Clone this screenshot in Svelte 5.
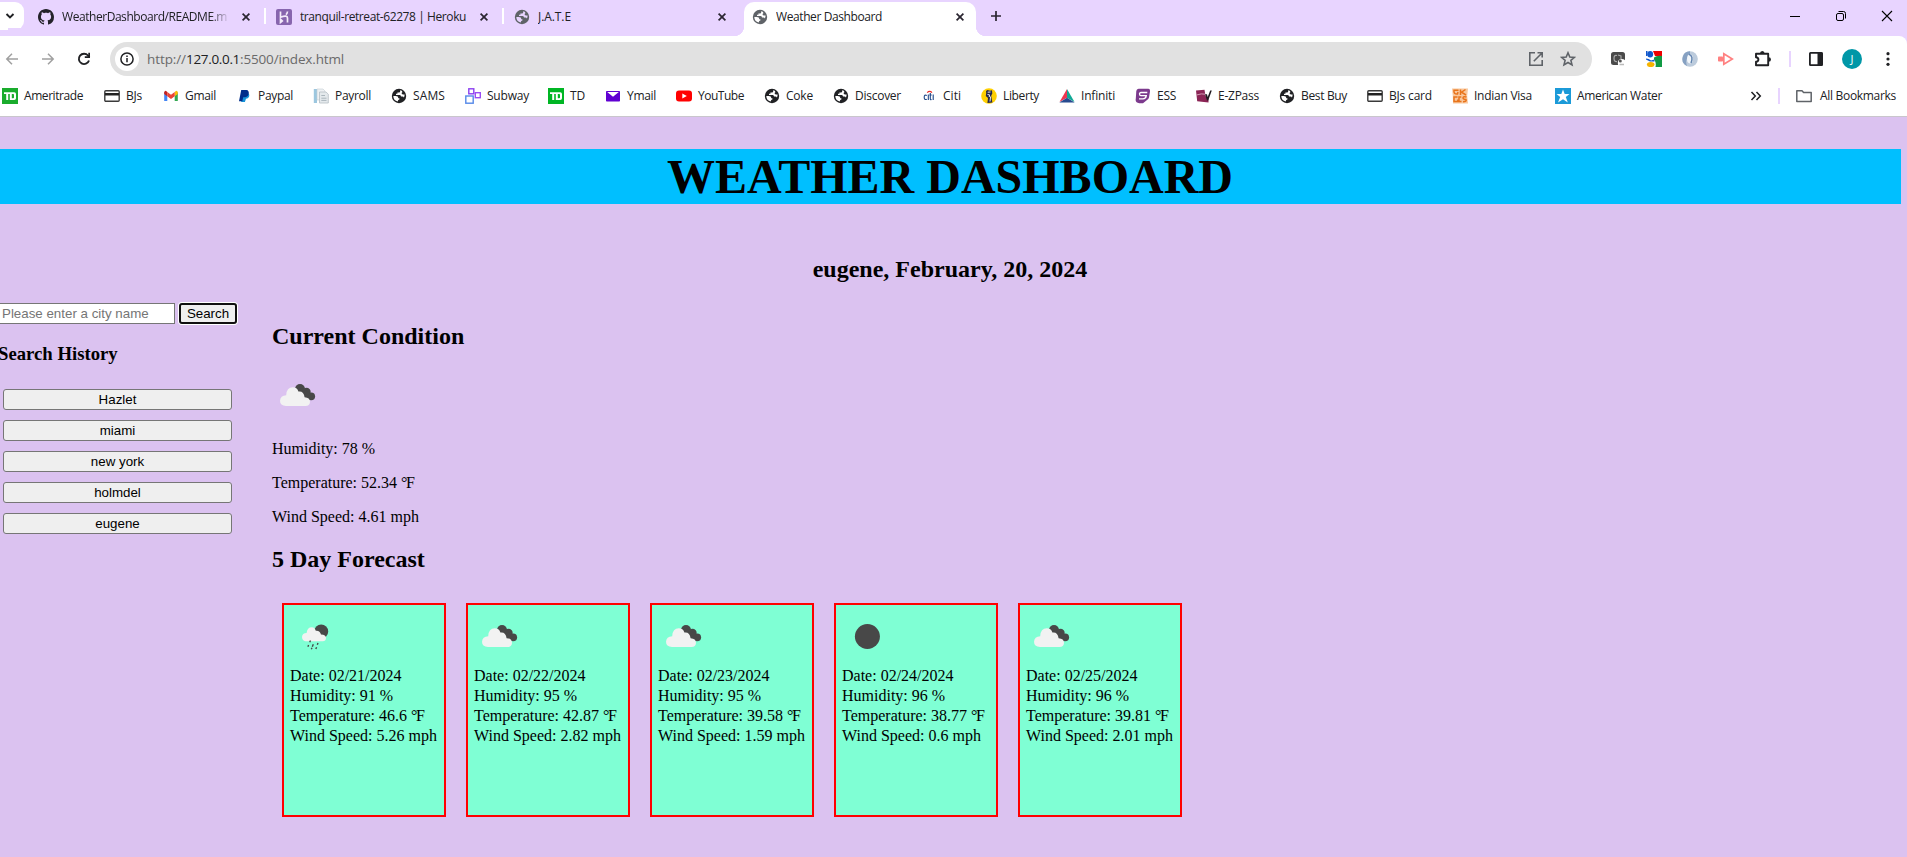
<script>
  // Spreads or tightens the letters of a label so that it takes the given width.
  function fit(node, width) {
    if (!width) return;
    node.style.letterSpacing = '0px';
    const natural = node.getBoundingClientRect().width;
    node.style.letterSpacing = `${(width - natural) / node.textContent.length}px`;
  }

  // x: left edge of the icon, w: label width
  const marks = [
    { x: 2, w: 59, icon: 'td', label: 'Ameritrade' },
    { x: 104, w: 16, icon: 'card', label: 'BJs' },
    { x: 163, w: 31, icon: 'gmail', label: 'Gmail' },
    { x: 236, w: 35, icon: 'paypal', label: 'Paypal' },
    { x: 313, w: 36, icon: 'payroll', label: 'Payroll' },
    { x: 391, w: 32, icon: 'globe', label: 'SAMS' },
    { x: 465, w: 42, icon: 'subway', label: 'Subway' },
    { x: 548, w: 15, icon: 'td2', label: 'TD' },
    { x: 605, w: 29, icon: 'ymail', label: 'Ymail' },
    { x: 676, w: 46, icon: 'youtube', label: 'YouTube' },
    { x: 764, w: 27, icon: 'globe', label: 'Coke' },
    { x: 833, w: 46, icon: 'globe', label: 'Discover' },
    { x: 921, w: 18, icon: 'citi', label: 'Citi' },
    { x: 981, w: 36, icon: 'liberty', label: 'Liberty' },
    { x: 1059, w: 34, icon: 'infiniti', label: 'Infiniti' },
    { x: 1135, w: 19, icon: 'ess', label: 'ESS' },
    { x: 1196, w: 41, icon: 'ezpass', label: 'E-ZPass' },
    { x: 1279, w: 46, icon: 'globe', label: 'Best Buy' },
    { x: 1367, w: 43, icon: 'card', label: 'BJs card' },
    { x: 1452, w: 58, icon: 'visa', label: 'Indian Visa' },
    { x: 1555, w: 85, icon: 'water', label: 'American Water' },
    { x: 1750 }
  ];
  const bookmarks = marks.slice(0, -1).map((m, i) => ({ ...m, slot: marks[i + 1].x - m.x }));

  const history = ['Hazlet', 'miami', 'new york', 'holmdel', 'eugene'];
  const days = [
    { icon: 'rain', date: '02/21/2024', humidity: 91, temp: '46.6', wind: '5.26' },
    { icon: 'cloud', date: '02/22/2024', humidity: 95, temp: '42.87', wind: '2.82' },
    { icon: 'cloud', date: '02/23/2024', humidity: 95, temp: '39.58', wind: '1.59' },
    { icon: 'moon', date: '02/24/2024', humidity: 96, temp: '38.77', wind: '0.6' },
    { icon: 'cloud', date: '02/25/2024', humidity: 96, temp: '39.81', wind: '2.01' }
  ];
</script>

{#snippet globe(color, land)}
  <svg width="16" height="16" viewBox="0 0 16 16">
    <circle cx="8" cy="8" r="7.200" fill={color} />
    <path d="M2.300 8H4.800Q7.400 8 7.400 10.200H8.400V11.400Q6.800 11.400 6.800 13.600A6 6 0 0 1 2.300 8Z" fill={land} />
    <path d="M9.200 2.300V3.200Q9.200 4.400 8 4.400H6.400V5.800H5V7H8.800Q10 7 10 8.600H11.400Q12.600 8.600 12.800 9.600A6 6 0 0 0 13.600 6.400H12Q10.400 6.400 10.600 4.800H11.200V3.200A6 6 0 0 0 9.200 2.300Z" fill={land} />
  </svg>
{/snippet}

{#snippet favicon(name)}
  {#if name === 'globe'}
    {@render globe('#202124', '#fff')}
  {:else}
    <svg width="16" height="16" viewBox="0 0 16 16">
      {#if name === 'td' || name === 'td2'}
        <rect width="16" height="16" fill={name === 'td' ? '#1aac2d' : '#00b624'} />
        <path d="M2 4.200H12.200Q14 4.200 14 6V10.200Q14 12 12.200 12H7.800V6H6.200V12H4.200V6H2ZM9.800 6V10.300H11.200Q12 10.300 12 9.600V6.700Q12 6 11.200 6Z" fill="#fff" fill-rule="evenodd" />
      {:else if name === 'card'}
        <rect x=".8" y="2.800" width="14.400" height="10.400" rx="1" fill="none" stroke="#3a3a3a" stroke-width="1.400" />
        <rect x="1" y="5" width="14" height="2.500" fill="#222" />
      {:else if name === 'gmail'}
        <path d="M1.200 4V13H4.300V7.500Z" fill="#4285f4" />
        <path d="M14.800 4V13H11.700V7.500Z" fill="#34a853" />
        <path d="M1.200 4.500Q1.200 2.800 2.800 2.800L4.300 3.900V8.200L1.200 6Z" fill="#c5221f" />
        <path d="M14.800 4.500Q14.800 2.800 13.200 2.800L11.700 3.900V8.200L14.800 6Z" fill="#fbbc04" />
        <path d="M4.300 3.900L8 6.700L11.700 3.900V8.200L8 11L4.300 8.200Z" fill="#ea4335" />
      {:else if name === 'paypal'}
        <path d="M6.400 5.500H12.500C14 6.600 13.500 10.500 10 10.800L8.900 14H5.200Z" fill="#1793d8" />
        <path d="M5.200 2H10.500C14 2.200 13.500 8.800 9.200 9.300H7.200L6.300 13.200H3Z" fill="#002d8b" />
      {:else if name === 'payroll'}
        <rect x=".8" y="1" width="3.200" height="14" fill="#9cc7df" />
        <path d="M4 1H10L12 3V12H4Z" fill="#eef1f3" stroke="#c5ced4" stroke-width=".6" />
        <path d="M6.500 4H13L15.300 6.200V15H6.500Z" fill="#e4e9ec" stroke="#b5bec4" stroke-width=".8" />
        <path d="M8.300 7.500H12M8.300 10.200H13.500M8.300 12.400H13.500" stroke="#aab5bc" stroke-width="1" />
      {:else if name === 'subway'}
        <rect x="3.800" y=".8" width="5" height="5" fill="none" stroke="#8b3ff0" stroke-width="1.400" />
        <rect x="10.300" y="4.700" width="5" height="5" fill="none" stroke="#9b4df2" stroke-width="1.400" />
        <rect x=".8" y="8" width="7.400" height="7.200" fill="none" stroke="#5589e8" stroke-width="1.400" />
      {:else if name === 'ymail'}
        <rect x="1" y="3" width="14" height="10.500" rx=".8" fill="#6001d2" />
        <path d="M2.200 4H13.800L8 8.800Z" fill="#fff" />
      {:else if name === 'youtube'}
        <rect y="2.500" width="16" height="11" rx="3" fill="#f00" />
        <path d="M6.300 5.600L10.800 8L6.300 10.400Z" fill="#fff" />
      {:else if name === 'citi'}
        <path d="M6.200 4.600Q8.600 2 11 4.600" fill="none" stroke="#e8302a" stroke-width="1.200" />
        <path d="M5.800 7.600Q3.200 6.200 3.200 9.300Q3.200 12.300 5.800 11.200M7.300 6.400V12M9.300 5V11Q9.400 12 10.600 11.600M8.300 7H10.700M12.200 6.400V12" fill="none" stroke="#1d4687" stroke-width="1.100" />
      {:else if name === 'liberty'}
        <circle cx="8" cy="8" r="7.800" fill="#ffd000" />
        <path d="M5 3L6.500 2L9 2.700L11 2.300L11.300 5.500L10.200 7.800L11.400 14.400L6.400 15L7 10L4.800 8L5.200 5Z" fill="#26284a" />
        <path d="M6.700 4.200L9.500 4M6.500 6.500L8.500 6.800L8.300 9M9.600 8.500L9 13.500" stroke="#fff" stroke-width=".9" fill="none" />
      {:else if name === 'infiniti'}
        <path d="M8 1L0.500 14L8 9.800Z" fill="#ed3650" />
        <path d="M8 1L15.500 14L8 9.800Z" fill="#10a995" />
        <path d="M.3 14.500L8 9.800L15.700 14.500Z" fill="#274b8f" />
      {:else if name === 'ess'}
        <path d="M3.500 .8H13.500Q15.500 1 15 3.500L14 9.500Q13.500 11 12 12L8 15.200Q2 15.600 1 13.500Q.3 12 .8 10.500L1.300 3Q1.600 1 3.500 .8Z" fill="#7c3a8d" />
        <path d="M12.300 4.500H6Q4.500 4.500 4.500 6Q4.500 7.600 6 7.600H11.300Q10.800 10.800 8 10.800H4" fill="none" stroke="#fff" stroke-width="1.300" />
      {:else if name === 'ezpass'}
        <path d="M0 2.400L8.500 1.800L9.500 8L12.500 11V14.500L1.200 13.300Z" fill="#8b2455" />
        <path d="M.5 7Q6 5.200 9 6.200" stroke="#d8a7bd" stroke-width=".9" fill="none" />
        <path d="M9 6.200H11L11.700 9L14.200 2.500H15.800L12.200 12.500H11Z" fill="#201a20" />
      {:else if name === 'visa'}
        <path d="M0 .5H16L15.200 8L16 15.500H1L.8 8Z" fill="#f9c79c" />
        <path d="M6.500 2.200H2Q1.300 6.300 5.500 6L6 4M8.500 1.500V7M13.500 1.500L9.500 4.200L14 7M14.500 9Q11 8 11 10Q11 11.200 14 11.500Q15 13.600 11 13.700M5.500 9H2V13.600H5.800V11.500M9.300 9H7V13.600H9.500" fill="none" stroke="#e8741b" stroke-width="1.500" />
      {:else if name === 'water'}
        <rect width="16" height="16" fill="#1b9ad8" />
        <path d="M8 1.500L9.700 6H14.500L10.800 9L12.800 14.500L8 11.200L3 14.500L5.200 9L1.500 6H6.300Z" fill="#fff" />
      {/if}
    </svg>
  {/if}
{/snippet}

{#snippet cross()}
  <svg class="cross" width="10" height="10" viewBox="0 0 10 10"><path d="M1.600 1.600L8.400 8.400M8.400 1.600L1.600 8.400" stroke="#2a2530" stroke-width="1.700" /></svg>
{/snippet}

{#snippet weather(kind)}
  <svg class="weather" width="50" height="50" viewBox="0 0 50 50">
    {#if kind === 'cloud'}
      <g fill="#484848">
        <circle cx="28" cy="19" r="5" /><circle cx="34.500" cy="22" r="4.200" /><circle cx="39.200" cy="26.300" r="3.900" />
        <path d="M24 20L31 18L38 24L38 30L30 27Z" />
      </g>
      <path d="M14 36Q8 35.600 8 30.700Q8.300 25.500 14.200 25.200Q14.600 17.300 20.800 17.300Q25 17.300 26.400 21.500Q31.700 20.700 32.600 27.200Q38 27.500 38 32Q37.700 36 33.500 36Z" fill="#f2f2f2" />
    {:else if kind === 'rain'}
      <circle cx="31.200" cy="20.500" r="7" fill="#484848" />
      <path d="M15.500 30.200Q12 29.600 12 26Q12.300 22.200 16.600 22Q17.200 16.300 21.800 16.300Q24.700 16.300 25.800 19.700Q30 19.300 31 23.500Q36 23.500 36 27Q35.700 30.200 32.800 30.200Z" fill="#f2f2f2" />
      <path d="M20.500 29.500L19.700 31.200M18.600 34L17.900 35.700M23.300 33.200L22.300 35.800M28 32L27.300 33.700M22 36.800L21.300 38.200M26.600 36.300L25.800 38" stroke="#484848" stroke-width="1.400" />
    {:else}
      <circle cx="25.400" cy="25.500" r="12.500" fill="#484848" />
    {/if}
  </svg>
{/snippet}

{#snippet fahrenheit()}<span class="degree">°</span>F{/snippet}

<div class="window">
  <header class="tabs">
    <div class="search-tabs"><svg width="10" height="8" viewBox="0 0 10 8"><path d="M1.500 2L5 5.500L8.500 2" fill="none" stroke="#202124" stroke-width="1.900" /></svg></div>

    <div class="tab first">
      <svg width="16" height="16" viewBox="0 0 16 16"><path fill="#24222a" d="M8 0C3.580 0 0 3.580 0 8c0 3.540 2.290 6.530 5.470 7.590.4.070.55-.17.55-.38 0-.19-.01-.82-.01-1.490-2.010.37-2.530-.49-2.690-.94-.09-.23-.48-.94-.82-1.130-.28-.15-.68-.52-.01-.53.63-.01 1.080.58 1.230.82.72 1.210 1.870.87 2.330.66.07-.52.28-.87.51-1.070-1.780-.2-3.640-.89-3.640-3.950 0-.87.31-1.590.82-2.150-.08-.2-.36-1.020.08-2.120 0 0 .67-.21 2.200.82.64-.18 1.320-.27 2-.27s1.360.09 2 .27c1.530-1.040 2.200-.82 2.200-.82.44 1.100.16 1.920.08 2.120.51.56.82 1.270.82 2.150 0 3.070-1.870 3.750-3.650 3.950.29.25.54.73.54 1.480 0 1.070-.01 1.930-.01 2.200 0 .21.15.46.55.38A8.010 8.010 0 0 0 16 8c0-4.420-3.580-8-8-8z" /></svg>
      <span class="title fade"><span use:fit={165}>WeatherDashboard/README.m</span></span>
      {@render cross()}
    </div>
    <i class="split"></i>
    <div class="tab second">
      <svg width="16" height="16" viewBox="0 0 16 16"><rect width="16" height="16" rx="2" fill="#8765ae" /><path d="M4.500 2.500V8.200Q11.500 5.800 11.500 9V13.500M11.500 2.500Q11.300 4.500 9.900 5.600M4.500 10.300V13.500L6.300 12Z" fill="none" stroke="#f3ebfa" stroke-width="1.700" /></svg>
      <span class="title"><span use:fit={166}>tranquil-retreat-62278 | Heroku</span></span>
      {@render cross()}
    </div>
    <i class="split"></i>
    <div class="tab third">
      {@render globe('#5f6368', '#e8d4ff')}
      <span class="title"><span use:fit={33}>J.A.T.E</span></span>
      {@render cross()}
    </div>
    <div class="tab active">
      {@render globe('#5f6368', '#fff')}
      <span class="title"><span use:fit={106}>Weather Dashboard</span></span>
      {@render cross()}
    </div>
    <svg class="plus" width="12" height="12" viewBox="0 0 12 12"><path d="M6 1V11M1 6H11" stroke="#2a2530" stroke-width="1.700" /></svg>
    <div class="controls">
      <svg width="12" height="12" viewBox="0 0 12 12"><path d="M1 6.500H11" stroke="#000" /></svg>
      <svg width="12" height="12" viewBox="0 0 12 12"><rect x="1.500" y="3.500" width="7" height="7" rx="1.500" fill="none" stroke="#000" /><path d="M3.500 1.500H8.500Q10.500 1.500 10.500 3.500V8.500" fill="none" stroke="#000" /></svg>
      <svg width="12" height="12" viewBox="0 0 12 12"><path d="M1 1L11 11M11 1L1 11" stroke="#000" stroke-width="1.100" /></svg>
    </div>
  </header>

  <div class="toolbar">
    <svg class="back" width="14" height="14" viewBox="0 0 14 14"><path d="M13 7H2M7 1.800L1.800 7L7 12.200" fill="none" stroke="#a0a0a0" stroke-width="1.500" /></svg>
    <svg class="forward" width="14" height="14" viewBox="0 0 14 14"><path d="M1 7H12M7 1.800L12.200 7L7 12.200" fill="none" stroke="#a0a0a0" stroke-width="1.500" /></svg>
    <svg class="reload" width="14" height="14" viewBox="0 0 14 14"><path d="M12 8.500A5.200 5.200 0 1 1 11 3.500L12.500 5" fill="none" stroke="#202124" stroke-width="1.900" /><path d="M13 .8V6H7.800V4.300H11.300V.8Z" fill="#202124" /></svg>
    <div class="omnibox">
      <div class="info"><svg width="16" height="16" viewBox="0 0 16 16"><circle cx="8" cy="8" r="6.100" fill="none" stroke="#202124" stroke-width="1.500" /><path d="M8 7V11.300M8 4.600V6" stroke="#202124" stroke-width="1.500" /></svg></div>
      <div class="url"><span use:fit={39}>http://</span><span class="host" use:fit={54}>127.0.0.1</span><span use:fit={104}>:5500/index.html</span></div>
      <svg class="open" width="16" height="16" viewBox="0 0 16 16"><path d="M7 1.800H1.800V14.200H14.200V9M9.500 1.800H14.200V6.500M14 2L5.800 10.200" fill="none" stroke="#5f6368" stroke-width="1.600" /></svg>
      <svg class="star" width="16" height="16" viewBox="0 0 16 16"><path d="M8 1.800L9.800 6L14.400 6.400L10.900 9.400L12 13.900L8 11.500L4 13.900L5.100 9.400L1.600 6.400L6.200 6Z" fill="none" stroke="#5f6368" stroke-width="1.600" /></svg>
    </div>
    <div class="extensions">
      <svg width="16" height="16" viewBox="0 0 16 16"><rect x="1" y="1" width="14" height="13" rx="2.500" fill="#4a4a4a" /><path d="M7 4.500Q4 3.500 4 7.500Q4 11 7 10.500M8 4L11 5V8" fill="none" stroke="#a9a9a9" stroke-width="1.200" /><circle cx="11.800" cy="12" r="4" fill="#fff" /><circle cx="10.300" cy="10" r="1.500" fill="#555" /><path d="M9.500 13.500H14" stroke="#bbb" stroke-width="1.500" /></svg>
      <svg width="16" height="16" viewBox="0 0 16 16"><rect width="16" height="16" fill="#fff" /><path d="M7 0H16V5H9Z" fill="#e00" /><path d="M8 6.500Q11 4 16 5V16H9.500Q10.500 11 8 8.500Z" fill="#119a44" /><ellipse cx="4.200" cy="3.200" rx="2.900" ry="3.200" fill="#1158cc" /><path d="M0 7.500Q3 7.500 5 9.500L8.500 8.500V10.500H4L0 8.500Z" fill="#1158cc" /><path d="M0 0H1.500V5H0Z" fill="#1158cc" /><ellipse cx="4.700" cy="13.500" rx="3.800" ry="2.600" fill="#f6b400" /></svg>
      <svg width="16" height="16" viewBox="0 0 16 16"><circle cx="8" cy="8" r="7.800" fill="#bccbdc" /><path d="M8 .3A7.700 7.700 0 0 0 5 15Q2.500 8 8 4Z" fill="#86a1c2" /><ellipse cx="8" cy="8" rx="3" ry="4.400" fill="#f2f6fa" /><path d="M7 3.400Q11.800 5 9 12" fill="none" stroke="#5f82ae" stroke-width="1.500" /></svg>
      <svg width="16" height="16" viewBox="0 0 16 16"><path d="M5.800 2.800L14.300 8L5.800 13.200Z" fill="none" stroke="#ff8080" stroke-width="1.700" /><rect x="0" y="5.500" width="5" height="5" rx=".8" fill="#ff8080" /></svg>
      <svg width="18" height="18" viewBox="0 0 18 18"><path d="M2 3.800H14.200V15.200H2V11.800Q4.400 11.600 4.400 9.500Q4.400 7.400 2 7.200Z" fill="none" stroke="#202124" stroke-width="1.900" stroke-linejoin="round" /><path d="M6 3.500A2.300 2.500 0 0 1 10.600 3.500ZM14.500 7.200A2.500 2.300 0 0 1 14.500 11.800Z" fill="#202124" /></svg>
    </div>
    <i class="bar"></i>
    <svg class="panel" width="16" height="16" viewBox="0 0 16 16"><rect x="1.900" y="1.900" width="12.200" height="12.200" rx=".6" fill="none" stroke="#202124" stroke-width="1.800" /><path d="M9.500 1.500H14.500V14.500H9.500Z" fill="#202124" /></svg>
    <div class="avatar">J</div>
    <svg class="dots" width="4" height="16" viewBox="0 0 4 16"><g fill="#202124"><circle cx="2" cy="2.700" r="1.600" /><circle cx="2" cy="8" r="1.600" /><circle cx="2" cy="13.300" r="1.600" /></g></svg>
  </div>

  <nav class="bookmarks">
    {#each bookmarks as b}
      <div class="bookmark" style="width: {b.slot}px">
        {@render favicon(b.icon)}
        <span use:fit={b.w}>{b.label}</span>
      </div>
    {/each}
    <svg class="more" width="12" height="10" viewBox="0 0 12 10"><path d="M1.500 1L5.300 5L1.500 9M6.500 1L10.300 5L6.500 9" fill="none" stroke="#202124" stroke-width="1.500" /></svg>
    <i class="bar"></i>
    <svg class="folder" width="16" height="16" viewBox="0 0 16 16"><path d="M.8 2.800H6L7.600 4.600H15.200V13.600H.8Z" fill="none" stroke="#5f6368" stroke-width="1.500" stroke-linejoin="round" /></svg>
    <span use:fit={76}>All Bookmarks</span>
  </nav>

  <main>
    <h1><span use:fit={566}>WEATHER DASHBOARD</span></h1>
    <h2 class="today">eugene, February, 20, 2024</h2>
    <div class="columns">
      <aside>
        <div class="form"><input placeholder="Please enter a city name" /><button class="search">Search</button></div>
        <h3>Search History</h3>
        <div class="history">
          {#each history as city}<button>{city}</button>{/each}
        </div>
      </aside>
      <section>
        <h2>Current Condition</h2>
        {@render weather('cloud')}
        <p>Humidity: 78 %</p>
        <p>Temperature: 52.34 {@render fahrenheit()}</p>
        <p>Wind Speed: 4.61 mph</p>
        <h2 class="forecast">5 Day Forecast</h2>
        <div class="cards">
          {#each days as d}
            <div class="card">
              {@render weather(d.icon)}
              <div>Date: {d.date}</div>
              <div>Humidity: {d.humidity} %</div>
              <div>Temperature: {d.temp} {@render fahrenheit()}</div>
              <div>Wind Speed: {d.wind} mph</div>
            </div>
          {/each}
        </div>
      </section>
    </div>
  </main>
</div>

<style>
  :global(body) { margin: 0; overflow: hidden; }
  * { box-sizing: border-box; }
  svg { display: block; flex: none; }
  .window { width: 1907px; height: 857px; overflow: hidden; display: flex; flex-direction: column; background: #dbc2f0; font-family: "Open Sans", "Noto Sans", sans-serif; font-size: 12px; color: #202124; }
  .tabs { height: 36px; flex: none; background: #e8d4ff; display: flex; align-items: flex-start; }
  .search-tabs { width: 24px; height: 28px; margin-top: 2px; background: #fff; border-radius: 0 9px 9px 0; display: flex; align-items: center; padding-left: 5px; }
  .tab { height: 33px; display: flex; align-items: center; gap: 8px; white-space: nowrap; }
  .title { flex: 1; overflow: hidden; line-height: 18px; }
  .title span, .url span, .bookmarks span, h1 span { display: inline-block; white-space: pre; }
  .first { width: 237px; margin-left: 14px; padding-right: 10px; margin-right: 3px; }
  .first .title { flex: none; width: 168px; margin-right: 3px; }
  .fade { mask-image: linear-gradient(to right, #000 148px, transparent 168px); }
  .split { width: 2px; height: 16px; margin-top: 8px; background: #fff; }
  .first + .split { margin-left: -14px; }
  .second { width: 213px; margin-left: 10px; margin-right: 13px; }
  .third { width: 213px; margin-left: 10px; }
  .active { width: 232px; height: 34px; margin: 2px 0 0 17px; padding: 0 11px 4px 8px; background: #fff; border-radius: 10px 10px 0 0; position: relative; }
  .active::before, .active::after { content: ""; position: absolute; bottom: 0; width: 10px; height: 10px; }
  .active::before { left: -10px; background: radial-gradient(circle at 0 0, transparent 10px, #fff 10.500px); }
  .active::after { right: -10px; background: radial-gradient(circle at 100% 0, transparent 10px, #fff 10.500px); }
  .plus { margin: 10px 0 0 14px; }
  .controls { display: flex; gap: 34px; margin: 10px 14px 0 auto; }

  .toolbar { height: 40px; flex: none; display: flex; align-items: center; background: #fff; padding: 6px 17px 0 5px; border-radius: 0 8px 0 0; box-shadow: 8px -8px 0 #e8d4ff; }
  .forward { margin-left: 22px; }
  .reload { margin-left: 22px; }
  .omnibox { margin-left: 19px; width: 1482px; height: 34px; border-radius: 17px; background: #e1e1e1; display: flex; align-items: center; padding: 0 16px 0 5px; }
  .info { width: 24px; height: 24px; border-radius: 50%; background: #fff; display: grid; place-items: center; }
  .url { flex: 1; margin-left: 8px; font-size: 13.500px; line-height: 20px; color: #6a6a6a; }
  .host { color: #202124; }
  .star { margin-left: 16px; }
  .extensions { display: flex; align-items: center; gap: 20px; margin-left: 18px; }
  .bar { width: 2px; height: 16px; background: #e8d4ff; }
  .extensions + .bar { margin-left: 17px; }
  .panel { margin-left: 17px; }
  .avatar { width: 20px; height: 20px; margin-left: 18px; border-radius: 50%; background: #0097a7; color: #fff; font-size: 11px; line-height: 20px; text-align: center; }
  .dots { margin-left: 24px; margin-right: -10px; }

  .bookmarks { height: 41px; flex: none; display: flex; align-items: center; background: #fff; border-bottom: 1px solid #c9c6cc; padding-left: 2px; line-height: 18px; }
  .bookmark { display: flex; align-items: center; gap: 6px; white-space: nowrap; flex: none; }
  .more { margin-right: 16px; }
  .folder { margin: 0 8px 0 16px; }

  main { font-family: "Liberation Serif", serif; font-size: 16px; color: #000; width: 1902px; margin-left: -1px; }
  h1 { margin: 32px 0 0; height: 55px; line-height: 55px; font-size: 48px; background: #00bfff; text-align: center; }
  h2 { margin: 0; font-size: 24px; line-height: 27px; }
  .today { margin-top: 52px; text-align: center; }
  .columns { display: flex; margin-top: 20px; }
  aside { width: 273px; flex: none; }
  .form { display: flex; gap: 4px; height: 21px; }
  input { width: 176px; height: 21px; padding: 1px 2px; border: 1px solid #767676; background: #fff; font: 13.333px "Liberation Sans", sans-serif; }
  input::placeholder { color: #757575; }
  button { font: 13.333px "Liberation Sans", sans-serif; color: #000; background: #efefef; border: 1px solid #767676; border-radius: 3px; padding: 0; height: 21px; }
  .search { width: 58px; border: 2px solid #101010; box-shadow: 0 0 0 1px #fff; }
  h3 { margin: 19px 0 0 -1px; font-size: 18.720px; line-height: 22px; }
  .history { display: grid; gap: 10px; margin: 24px 0 0 4px; width: 229px; }
  section { padding-top: 20px; }
  section > .weather { margin: 20px 0; }
  p { margin: 0 0 16px; line-height: 18px; }
  .degree { letter-spacing: -1.600px; }
  .forecast { margin-top: 20px; }
  .cards { display: flex; gap: 20px; margin: 30px 0 0 10px; }
  .card { width: 164px; height: 214px; border: 2px solid red; background: #7fffd4; padding: 6px; line-height: 20px; white-space: nowrap; }
  .card .weather { margin-bottom: 5px; }
</style>
